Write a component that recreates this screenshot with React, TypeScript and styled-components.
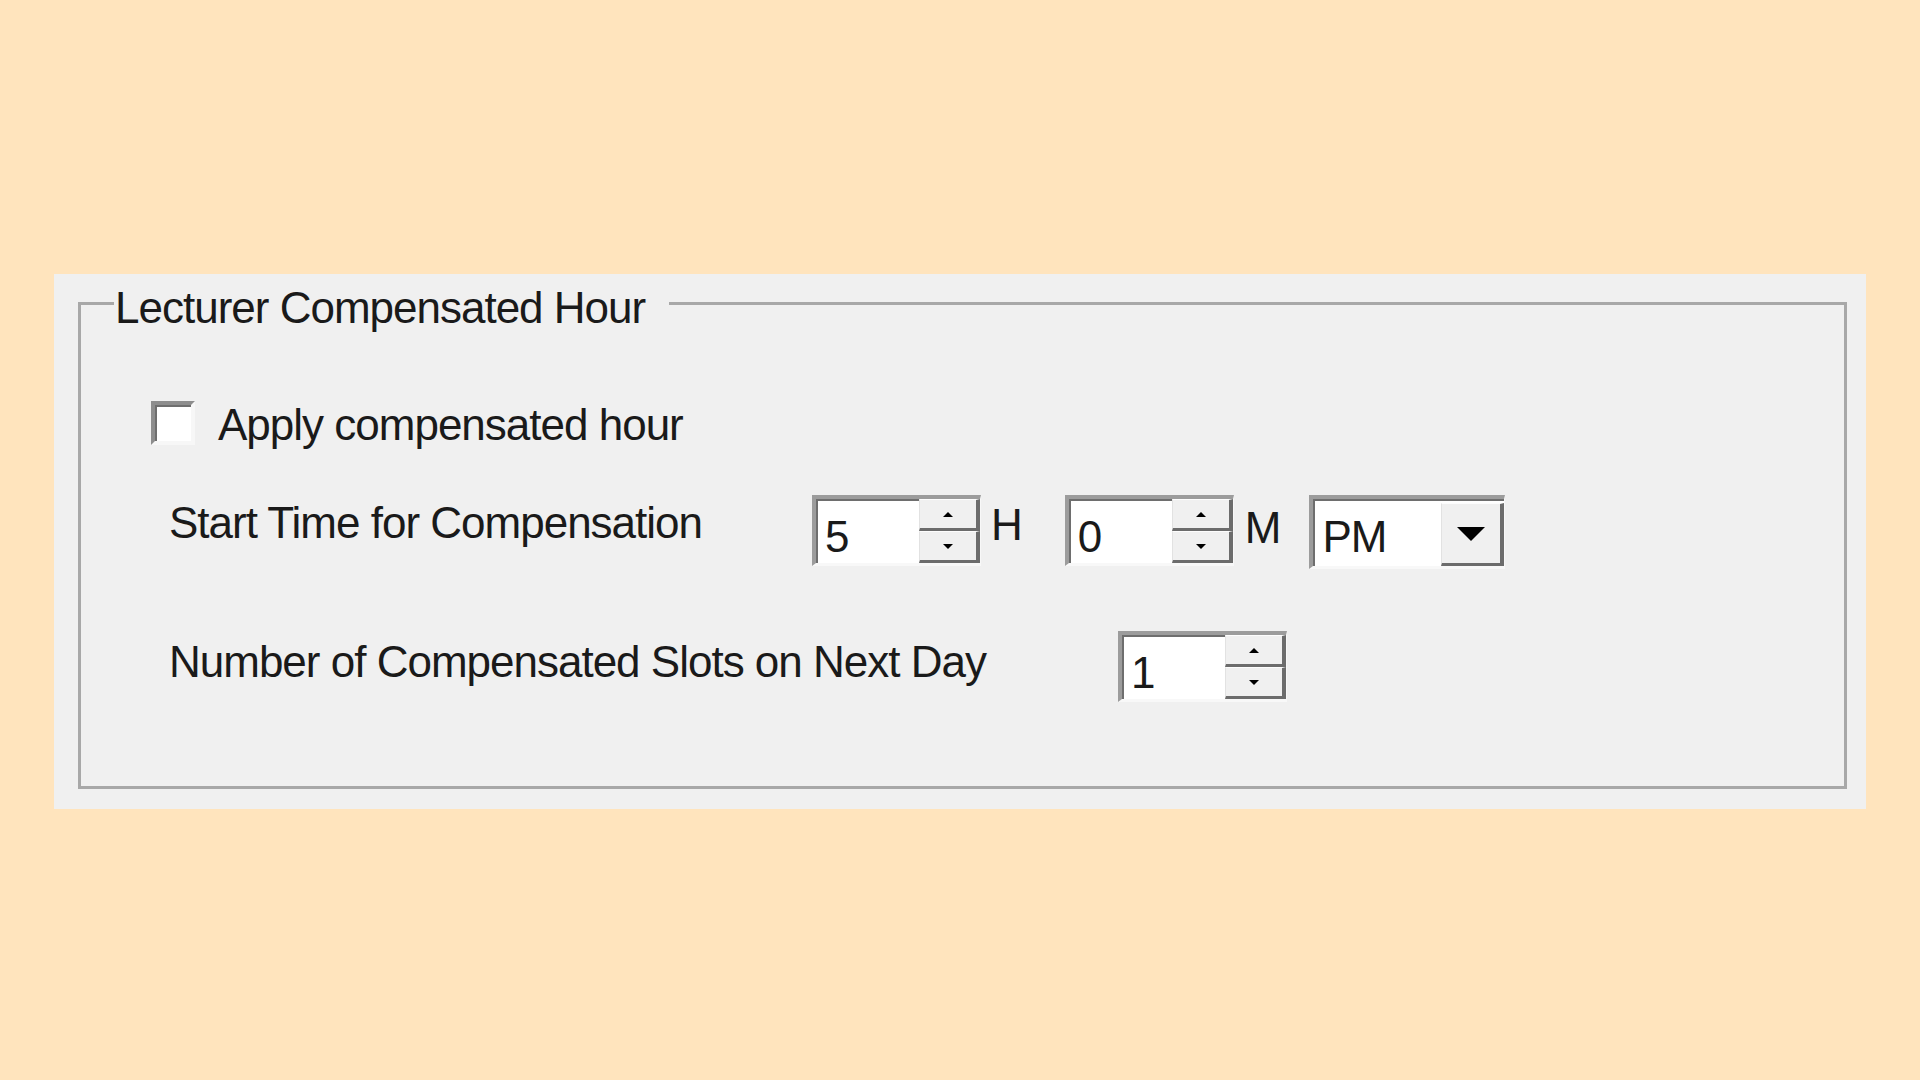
import styled, { createGlobalStyle } from "styled-components";

const GlobalStyle = createGlobalStyle`
  html, body {
    margin: 0;
    padding: 0;
    background: #ffe4bd;
  }
  body {
    min-height: 1080px;
    font-family: "Liberation Sans", Arial, sans-serif;
    color: #1a1a1a;
  }
  * {
    box-sizing: border-box;
  }
`;

const Page = styled.main`
  padding: 274px 0 0 54px;
`;

const Panel = styled.section`
  width: 1812px;
  background: #f0f0f0;
  padding: 0 19px 20px 24px;
`;

const GroupBox = styled.fieldset`
  margin: 0;
  min-width: 0;
  padding: 67px 0 84px 0;
  border: 3px solid #a8a8a8;
`;

const Title = styled.legend`
  margin-left: 33px;
  padding: 9px 24px 0 1px;
  font-size: 44px;
  line-height: 50px;
  letter-spacing: -1px;
  white-space: nowrap;
`;

const Row = styled.div<{ $top?: number; $indent: number }>`
  display: flex;
  align-items: flex-start;
  margin-top: ${(p) => p.$top ?? 0}px;
  padding-left: ${(p) => p.$indent}px;
`;

const Label = styled.span<{ $width?: number; $drop?: number; $left?: number }>`
  flex-shrink: 0;
  width: ${(p) => (p.$width ? `${p.$width}px` : "auto")};
  margin-top: ${(p) => p.$drop ?? 0}px;
  margin-left: ${(p) => p.$left ?? 0}px;
  font-size: 44px;
  line-height: 50px;
  letter-spacing: -1px;
  white-space: nowrap;
`;

const CheckBox = styled.span`
  flex-shrink: 0;
  width: 44px;
  height: 44px;
  margin-top: 1px;
  background: #fff;
  border: 4px solid;
  border-color: #8d8d8d #f7f7f7 #f7f7f7 #8d8d8d;
  box-shadow: inset 2px 2px 0 #6e6e6e;
`;

const Sunken = styled.div<{ $width: number; $height?: number }>`
  display: flex;
  flex-shrink: 0;
  width: ${(p) => p.$width}px;
  height: ${(p) => p.$height ?? 71}px;
  background: #fff;
  border-style: solid;
  border-width: 4px 1px 3px 4px;
  border-color: #9c9c9c #f8f8f8 #f8f8f8 #9c9c9c;
  box-shadow: inset 2px 2px 0 #6e6e6e;
`;

const Value = styled.div`
  flex: 1;
  padding: 13px 0 0 9px;
  font-size: 44px;
  line-height: 50px;
  letter-spacing: -1px;
`;

const Steps = styled.div`
  display: flex;
  flex-direction: column;
  width: 61px;
`;

const Step = styled.div`
  flex: 1;
  display: flex;
  align-items: center;
  justify-content: center;
  background: #f0f0f0;
  border-style: solid;
  border-width: 1px 4px 3px 1px;
  border-color: #fdfdfd #6c6c6c #6c6c6c #e2e2e2;
`;

const Arrow = styled.span<{ $dir: "up" | "down"; $size: number }>`
  width: 0;
  height: 0;
  border-left: ${(p) => p.$size}px solid transparent;
  border-right: ${(p) => p.$size}px solid transparent;
  ${(p) =>
    p.$dir === "up"
      ? `border-bottom: ${p.$size}px solid #000;`
      : `border-top: ${p.$size}px solid #000;`}
`;

const DropButton = styled(Step)`
  flex: none;
  width: 63px;
  margin-top: 4px;
`;

const Unit = styled.span<{ $drop: number; $before: number; $after: number }>`
  flex-shrink: 0;
  margin: ${(p) => p.$drop}px ${(p) => p.$after}px 0 ${(p) => p.$before}px;
  font-size: 44px;
  line-height: 50px;
  letter-spacing: -1px;
`;

const Spinner = ({ value, width }: { value: string; width: number }) => (
  <Sunken $width={width}>
    <Value>{value}</Value>
    <Steps>
      <Step>
        <Arrow $dir="up" $size={5} />
      </Step>
      <Step>
        <Arrow $dir="down" $size={5} />
      </Step>
    </Steps>
  </Sunken>
);

const App = () => {
  return (
    <Page>
      <GlobalStyle />
      <Panel>
        <GroupBox>
          <Title>Lecturer Compensated Hour</Title>
          <Row $indent={70}>
            <CheckBox />
            <Label $left={23}>Apply compensated hour</Label>
          </Row>
          <Row $indent={88} $top={45}>
            <Label $width={643} $drop={3}>
              Start Time for Compensation
            </Label>
            <Spinner value="5" width={169} />
            <Unit $drop={5} $before={10} $after={43}>
              H
            </Unit>
            <Spinner value="0" width={169} />
            <Unit $drop={8} $before={11} $after={29}>
              M
            </Unit>
            <Sunken $width={196} $height={74}>
              <Value>PM</Value>
              <DropButton>
                <Arrow $dir="down" $size={14} />
              </DropButton>
            </Sunken>
          </Row>
          <Row $indent={88} $top={62}>
            <Label $width={949} $drop={6}>
              Number of Compensated Slots on Next Day
            </Label>
            <Spinner value="1" width={169} />
          </Row>
        </GroupBox>
      </Panel>
    </Page>
  );
};

export default App;
